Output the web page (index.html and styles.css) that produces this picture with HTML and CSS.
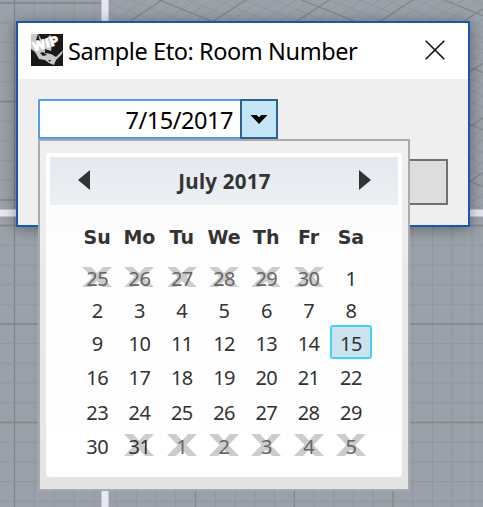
FILE: index.html
```
<!DOCTYPE html>
<html lang="en">
<head>
<meta charset="utf-8">
<title>Sample Eto: Room Number</title>
<link rel="stylesheet" href="styles.css">
</head>
<body>
<svg class="viewport" width="483" height="507" aria-hidden="true">
  <g id="lines"></g>
</svg>
<main class="window">
  <header class="titlebar">
    <svg class="logo" width="32" height="32" viewBox="0 0 32 32">
      <rect width="32" height="32" fill="#191919"/>
      <path fill="#c8c8c8" d="M0 0H7L12 8 19 1 22 4 20 17 14 15 14 19 20 20 25 23 32 16 31 20 25 26 23 31 18 29 14 26 8 25 4 18 0 15Z"/>
      <path fill="#191919" d="M7 0 5 6 9 7ZM9 19 12 18 16 21 12 22ZM17 26 20 26 19 28Z"/>
      <text class="wip" x="2.5" y="17.5" transform="rotate(-16 3 17)" textLength="27" lengthAdjust="spacingAndGlyphs">WIP</text>
    </svg>
    <h1>Sample Eto: Room Number</h1>
    <svg class="close" width="20" height="20" viewBox="0 0 20 20"><path d="M.7.7 19.3 19.3M19.3.7.7 19.3"/></svg>
  </header>
  <section class="content">
    <div class="picker">
      <div class="field">7/15/2017</div>
      <div class="drop"><svg width="18" height="9" viewBox="0 0 18 9"><path d="M.5 0H6.5L9 2.2 11.5 0H17.5L9 9Z"/></svg></div>
      <div class="popup">
        <div class="calendar">
          <div class="month">
            <svg width="12" height="20"><path d="M12 0V20L0 10Z"/></svg>
            <b>July 2017</b>
            <svg width="12" height="20"><path d="M0 0V20L12 10Z"/></svg>
          </div>
          <div class="weekdays"><b>Su</b><b>Mo</b><b>Tu</b><b>We</b><b>Th</b><b>Fr</b><b>Sa</b></div>
          <div class="days" id="days"></div>
        </div>
      </div>
    </div>
    <div class="button"></div>
  </section>
</main>
<script src="script.js"></script>
</body>
</html>
```
FILE: styles.css
```
* { box-sizing: border-box; }
body {
  margin: 0;
  width: 483px;
  height: 507px;
  overflow: hidden;
  padding: 21px 13px 0 16px;
  background: #9ba1a9;
  font-family: "Noto Sans", "Open Sans", sans-serif;
  color: #333;
}
svg { display: block; flex: none; }
.viewport { position: absolute; left: 0; top: 0; z-index: -1; }
.viewport path { fill: none; }
.viewport .minor { stroke: #91979f; stroke-width: 1; }
.viewport .fine { stroke: #8f959d; stroke-width: .8; }
.viewport .major { stroke: #82858c; stroke-width: 1.3; }
.viewport .pane { fill: #9ba1a9; }
.viewport .split { fill: #e8e9f0; stroke: #c0c4d4; stroke-width: 1; }
.window {
  width: 454px;
  height: 206px;
  border: 2px solid #1855b5;
  background: #efefef;
  box-shadow: 0 2px 14px rgba(0, 0, 0, .38);
}
.titlebar {
  height: 56px;
  background: #fff;
  display: flex;
  align-items: center;
  padding: 0 23px 2px 13px;
}
.logo { overflow: hidden; }
.wip { font: bold 12.5px "DejaVu Sans", sans-serif; fill: #fff; stroke: #fff; stroke-width: .6; }
h1 {
  margin: 0 auto 0 5px;
  font-size: 23.5px;
  font-weight: 400;
  line-height: 32px;
  letter-spacing: -.42px;
  white-space: nowrap;
  color: #000;
  padding-top: 2px;
}
.close path { stroke: #111; stroke-width: 1.6; fill: none; }
.content { padding: 20px; }
.picker { position: relative; display: flex; width: 240px; height: 40px; }
.field {
  width: 202px;
  border: 2px solid #569de5;
  border-right: 0;
  background: #fff;
  color: #000;
  text-align: right;
  padding-right: 7px;
  font-size: 23.5px;
  line-height: 39px;
  letter-spacing: -.45px;
}
.drop {
  width: 38px;
  border: 2px solid #2c628b;
  background: #c4e5f6;
  display: grid;
  place-items: center;
}
.button {
  width: 120px;
  height: 46px;
  margin: 20px 0 0 auto;
  border: 2px solid #707070;
  background: #ddd;
}
.popup {
  position: absolute;
  left: 0;
  top: 40px;
  width: 372px;
  height: 352px;
  padding: 12px 6px 0;
  border: 2px solid #a9aaaf;
  background: linear-gradient(#efefef, #e4e4e4);
}
.calendar {
  height: 324px;
  padding: 4px;
  border-radius: 4px;
  background: linear-gradient(#fcfcfc, #fff);
}
.month {
  height: 48px;
  padding: 0 27px 3px 28px;
  display: flex;
  align-items: center;
  justify-content: space-between;
  background: linear-gradient(#e5e9f0, #ebf0f4);
  box-shadow: 0 0 0 4px #fff;
  clip-path: inset(-4px -4px 0 round 4px 4px 0 0);
}
.month svg { fill: #333; }
.month b { font-size: 20.5px; line-height: 26px; padding-top: 3px; letter-spacing: .25px; }
.weekdays, .days {
  display: grid;
  grid-template-columns: repeat(7, 42.3px);
  margin-left: 26px;
  text-align: center;
}
.weekdays { height: 58px; padding-top: 20px; line-height: 25px; font-family: "DejaVu Sans", sans-serif; }
.weekdays b { font-size: 19px; }
.days {
  grid-template-rows: 32px 32.5px 33.5px 34.5px 34.5px 34px;
  font-size: 20px;
  letter-spacing: -.6px;
}
.days div { position: relative; display: grid; place-items: center; line-height: 30px; }
.days span { grid-area: 1 / 1; position: relative; }
.days svg { grid-area: 1 / 1; fill: #ccc; margin-bottom: 4px; }
.days .outside { color: #666; }
.days .selected {
  border: 2px solid #45d2f8;
  border-radius: 3px;
  background: #cbe3ec;
  margin: -3px 0 0;
  height: 34px;
  padding-top: 2px;
}
```
FILE: script.js
```
const lines = [];
const line = (cls, x1, y1, x2, y2) => lines.push(`<path class="${cls}" d="M${x1} ${y1}L${x2} ${y2}"/>`);
const kind = (n, minor = 'minor') => (((n % 5) + 5) % 5 === 0 ? 'major' : minor);

// perspective pane
for (let i = -10; i < 20; i++) {
  const x = 159 + i * 28.5;
  line(kind(i, 'fine'), x - 600, -240, x + 600, 240);
}
for (let i = -10; i < 50; i++) {
  const x = 162 + i * 16.7;
  line(kind(i, 'fine'), x - 400, 262, x + 40, -26);
}
// flat panes
lines.push('<path style="fill:#9ba1a9" d="M0 0H101V209H0ZM0 217H483V507H0Z"/>');
for (let i = 0; i < 5; i++) line(kind(i), 14.5 + i * 19.9, 0, 14.5 + i * 19.9, 507);
for (let i = -4; i < 15; i++) line(kind(i), 195.5 + i * 19.75, 217, 195.5 + i * 19.75, 507);
for (let j = 0; j < 11; j++) line(kind(j), 0, 3 + j * 19.7, 101, 3 + j * 19.7);
for (let j = 0; j < 15; j++) line(kind(j), 0, 225.5 + j * 19.7, 483, 225.5 + j * 19.7);
lines.push('<path class="split" style="fill:#e8e9f0" d="M101.5 -1H108.5V209.5H484V216.5H108.5V508H101.5V216.5H-1V209.5H101.5Z"/>');
document.getElementById('lines').innerHTML = lines.join('');

// six weeks starting on Sunday 25 June
const days = [];
for (let i = 0; i < 42; i++) {
  const day = new Date(2017, 5, 25 + i);
  const outside = day.getMonth() !== 6;
  const last = i === 36;
  const h = i < 7 ? 20 : 22;
  const cross = outside || last
    ? `<svg width="30" height="${h}" viewBox="0 0 30 20" preserveAspectRatio="none"><path d="M0 0H9L15 6 21 0H30L19.5 10 30 20H21L15 14 9 20H0L10.5 10Z"/></svg>` : '';
  const cls = outside ? 'outside' : i === 20 ? 'selected' : '';
  days.push(`<div class="${cls}">${cross}<span>${day.getDate()}</span></div>`);
}
document.getElementById('days').innerHTML = days.join('');
```
